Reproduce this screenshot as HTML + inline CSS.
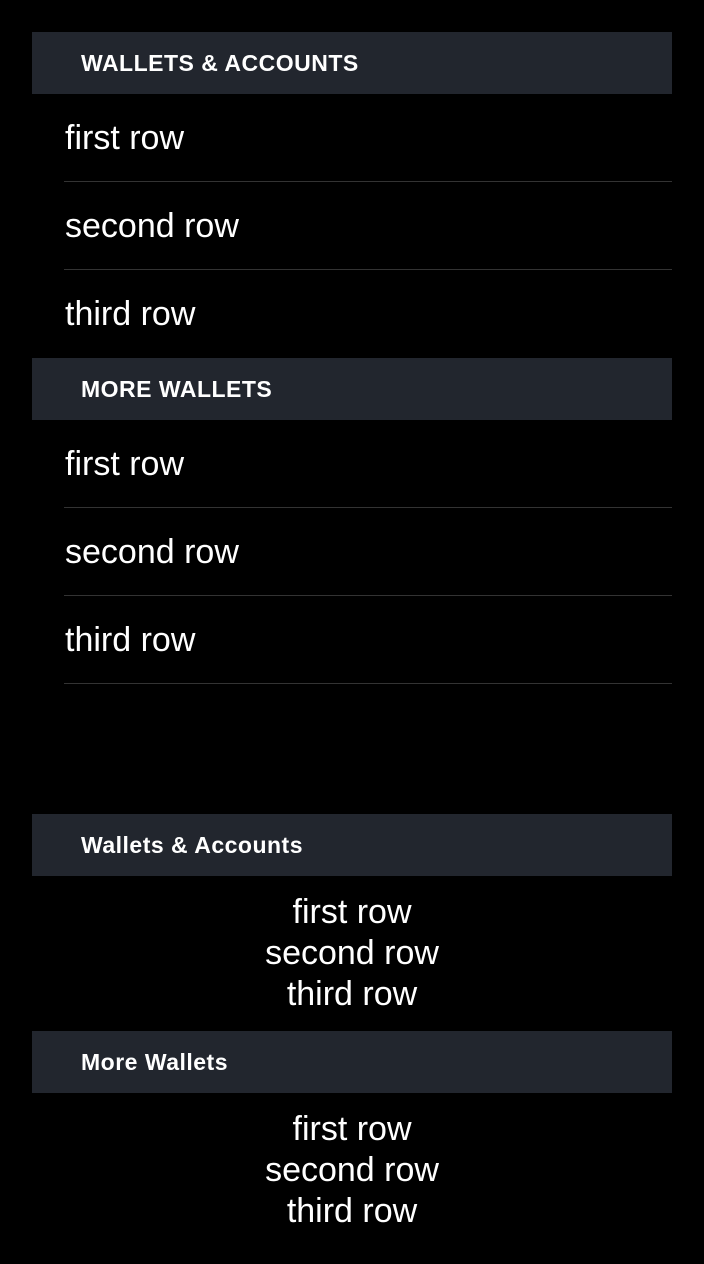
<!DOCTYPE html>
<html><head><meta charset="utf-8"><style>
body{margin:0;background:#000;width:704px;height:1264px;overflow:hidden;font-family:"Liberation Sans",sans-serif;color:#fff}
.h{position:absolute;left:32px;width:640px;height:62px;background:#22262e;box-sizing:border-box;padding-left:49px;line-height:62px;font-size:23px;font-weight:bold;letter-spacing:0.5px}
.r{position:absolute;left:64px;width:608px;height:88px;line-height:88px;font-size:34px;box-sizing:border-box;padding-left:1px}
.d{border-bottom:1px solid #333}
.c{position:absolute;left:0;width:704px;text-align:center;font-size:34px;line-height:41px}
</style></head><body>
<div class="h" style="top:32px">WALLETS &amp; ACCOUNTS</div>
<div class="r d" style="top:94px">first row</div>
<div class="r d" style="top:182px">second row</div>
<div class="r" style="top:270px">third row</div>
<div class="h" style="top:358px">MORE WALLETS</div>
<div class="r d" style="top:420px">first row</div>
<div class="r d" style="top:508px">second row</div>
<div class="r d" style="top:596px">third row</div>
<div class="h" style="top:814px">Wallets &amp; Accounts</div>
<div class="c" style="top:892px">first row<br>second row<br>third row</div>
<div class="h" style="top:1031px">More Wallets</div>
<div class="c" style="top:1109px">first row<br>second row<br>third row</div>
</body></html>
